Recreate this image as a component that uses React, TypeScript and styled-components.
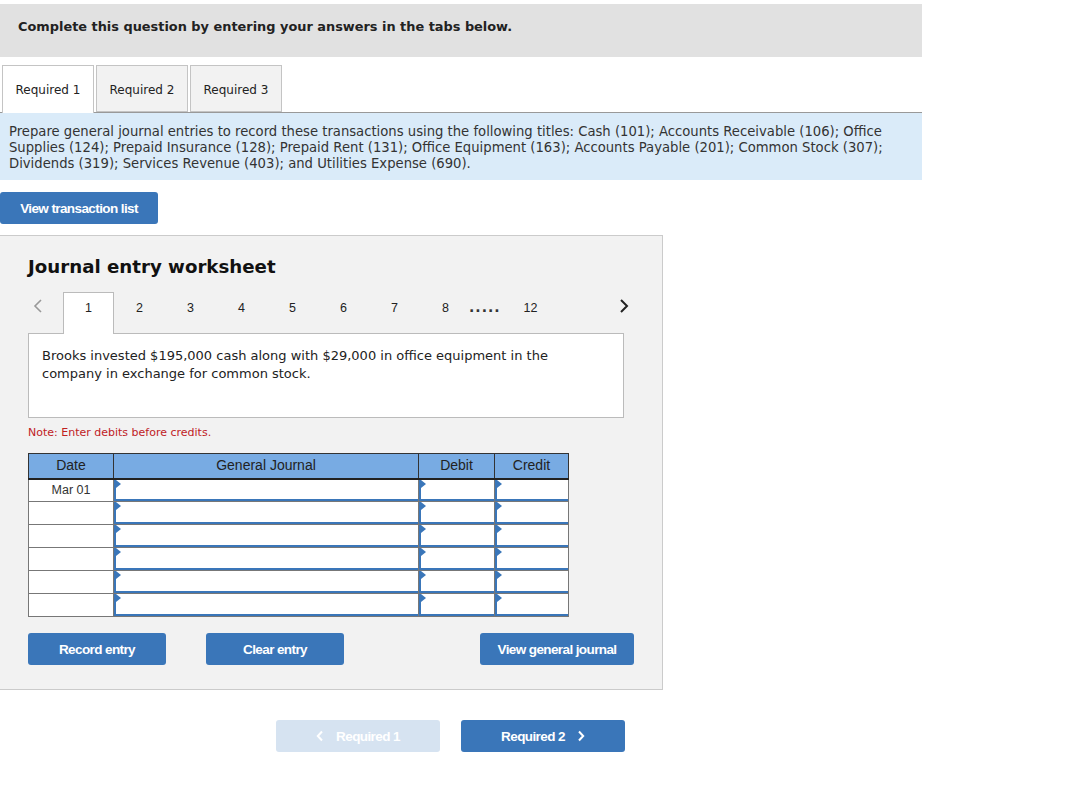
import React from "react";
import styled, { createGlobalStyle } from "styled-components";

const Global = createGlobalStyle`
  html, body { margin: 0; padding: 0; background: #fff; }
  body { font-family: "DejaVu Sans", Verdana, sans-serif; color: #222; }
`;

const Page = styled.div`
  width: 1075px;
  padding-top: 4px;
`;

const Banner = styled.div`
  width: 922px;
  height: 53px;
  background: #e1e1e1;
  box-sizing: border-box;
  padding: 15px 0 0 18px;
  font-size: 12.9px;
  line-height: 16px;
  font-weight: bold;
  color: #222;
`;

const TabBar = styled.div`
  width: 922px;
  margin-top: 8px;
  display: flex;
  gap: 2px;
  padding-left: 2px;
  box-sizing: border-box;
  border-bottom: 1px solid #999;
  height: 48px;
`;

const Tab = styled.div<{ $active?: boolean }>`
  width: 92px;
  height: ${(p) => (p.$active ? "48px" : "47px")};
  box-sizing: border-box;
  border: 1px solid #c4c4c4;
  border-bottom: ${(p) => (p.$active ? "none" : "1px solid #c4c4c4")};
  background: ${(p) => (p.$active ? "#fff" : "#f2f2f2")};
  display: flex;
  align-items: center;
  justify-content: center;
  font-size: 12px;
  color: #222;
  margin-bottom: ${(p) => (p.$active ? "-1px" : "0")};
  padding-top: ${(p) => (p.$active ? "0" : "2px")};
`;

const Info = styled.div`
  width: 922px;
  box-sizing: border-box;
  background: #daebf9;
  padding: 11px 9px 8px 9px;
  font-size: 13.2px;
  line-height: 16px;
  color: #333;
`;

const Btn = styled.button<{ $w: number; $disabled?: boolean }>`
  width: ${(p) => p.$w}px;
  height: 32px;
  border: none;
  border-radius: 3px;
  background: ${(p) => (p.$disabled ? "#d6e3f1" : "#3a76b9")};
  color: #fff;
  font-family: "Liberation Sans Narrow", "Liberation Sans", Arial, sans-serif;
  font-weight: bold;
  font-size: 13.5px;
  letter-spacing: -0.6px;
  display: flex;
  align-items: center;
  justify-content: center;
  gap: 12px;
  padding: 0;
  cursor: pointer;
`;

const TopBtnRow = styled.div`
  margin-top: 12px;
`;

const Worksheet = styled.div`
  margin-top: 11px;
  width: 663px;
  height: 455px;
  box-sizing: border-box;
  background: #f2f2f2;
  border: 1px solid #cbcbcb;
  border-left: none;
  padding: 19px 0 0 28px;
`;

const Title = styled.h2`
  margin: 0;
  font-size: 18.2px;
  font-weight: bold;
  color: #111;
  line-height: 24px;
`;

const Pager = styled.div`
  margin-top: 13px;
  height: 41px;
  display: flex;
  align-items: flex-start;
  width: 610px;
`;

const Chevron = styled.span<{ $dark?: boolean }>`
  width: 20px;
  display: flex;
  justify-content: center;
  padding-top: 6px;
  color: ${(p) => (p.$dark ? "#222" : "#999")};
`;

const PageNum = styled.div<{ $active?: boolean }>`
  width: 51px;
  box-sizing: border-box;
  display: flex;
  justify-content: center;
  padding-top: 7px;
  font-family: "Liberation Sans", Arial, sans-serif;
  font-size: 12.5px;
  line-height: 16px;
  color: #222;
  background: ${(p) => (p.$active ? "#fff" : "transparent")};
  border: ${(p) => (p.$active ? "1px solid #bbb" : "1px solid transparent")};
  border-bottom: none;
  position: relative;
  z-index: 1;
  height: ${(p) => (p.$active ? "42px" : "41px")};
`;

const Dots = styled.div`
  width: 36px;
  margin-left: -2px;
  padding-top: 7px;
  font-size: 14px;
  line-height: 16px;
  font-weight: bold;
  letter-spacing: 1px;
  color: #333;
`;

const Desc = styled.div`
  width: 596px;
  height: 85px;
  box-sizing: border-box;
  background: #fff;
  border: 1px solid #bbb;
  padding: 13px 13px;
  font-size: 13px;
  line-height: 18px;
  color: #222;
`;

const Note = styled.div`
  margin-top: 8px;
  font-size: 11px;
  color: #c0211f;
  line-height: 14px;
`;

const Table = styled.table`
  margin-top: 13px;
  border-collapse: collapse;
  font-family: "Liberation Sans", Arial, sans-serif;
  font-size: 12.5px;
`;

const Th = styled.th<{ $w: number }>`
  width: ${(p) => p.$w}px;
  height: 25px;
  box-sizing: border-box;
  background: #78abe3;
  border: 1px solid #333;
  border-bottom: 2px solid #222;
  font-weight: normal;
  font-size: 14px;
  color: #222;
  padding: 0 0 2px 0;
`;

const Td = styled.td`
  height: 23px;
  padding: 0;
  border: 1px solid #777;
  box-sizing: border-box;
  text-align: center;
  color: #333;
  background: #fff;
`;

const InputCell = styled.td`
  height: 23px;
  padding: 0;
  border: 1px solid #777;
  box-sizing: border-box;
  background: #fff;
  position: relative;
`;

const Field = styled.div`
  position: absolute;
  inset: 0;
  border-left: 2px solid #3a76b9;
  border-bottom: 2px solid #3a76b9;
  background: #fff;
`;

const Marker = styled.span`
  position: absolute;
  left: 0;
  top: 0;
  width: 0;
  height: 0;
  border-top: 4px solid transparent;
  border-bottom: 4px solid transparent;
  border-left: 5px solid #3a76b9;
`;

const ActionRow = styled.div`
  margin-top: 16px;
  display: flex;
  width: 606px;
`;

const Spacer = styled.div<{ $w?: number }>`
  width: ${(p) => (p.$w ? `${p.$w}px` : "auto")};
  flex: ${(p) => (p.$w ? "none" : "1")};
`;

const NavRow = styled.div`
  margin-top: 30px;
  padding-left: 276px;
  display: flex;
  gap: 21px;
`;

const ChevL = ({ color = "#999" }: { color?: string }) => (
  <svg width="10" height="16" viewBox="0 0 10 16">
    <path d="M8 2 L2 8 L8 14" fill="none" stroke={color} strokeWidth="1.6" />
  </svg>
);
const ChevR = ({ color = "#222" }: { color?: string }) => (
  <svg width="10" height="16" viewBox="0 0 10 16">
    <path d="M2 2 L8 8 L2 14" fill="none" stroke={color} strokeWidth="2" />
  </svg>
);
const SmallChev = ({ dir }: { dir: "l" | "r" }) => (
  <svg width="8" height="12" viewBox="0 0 8 12">
    <path
      d={dir === "l" ? "M6 1.5 L1.8 6 L6 10.5" : "M2 1.5 L6.2 6 L2 10.5"}
      fill="none"
      stroke="#fff"
      strokeWidth="2"
    />
  </svg>
);

export default function App() {
  const rows = ["Mar 01", "", "", "", "", ""];
  return (
    <Page>
      <Global />
      <Banner>Complete this question by entering your answers in the tabs below.</Banner>
      <TabBar>
        <Tab $active>Required 1</Tab>
        <Tab>Required 2</Tab>
        <Tab>Required 3</Tab>
      </TabBar>
      <Info>
        Prepare general journal entries to record these transactions using the following titles: Cash (101); Accounts Receivable (106); Office
        <br />
        Supplies (124); Prepaid Insurance (128); Prepaid Rent (131); Office Equipment (163); Accounts Payable (201); Common Stock (307);
        <br />
        Dividends (319); Services Revenue (403); and Utilities Expense (690).
      </Info>
      <TopBtnRow>
        <Btn $w={158}>View transaction list</Btn>
      </TopBtnRow>
      <Worksheet>
        <Title>Journal entry worksheet</Title>
        <Pager>
          <Chevron>
            <ChevL />
          </Chevron>
          <Spacer $w={15} />
          <PageNum $active>1</PageNum>
          {[2, 3, 4, 5, 6, 7, 8].map((n) => (
            <PageNum key={n}>{n}</PageNum>
          ))}
          <Dots>.....</Dots>
          <PageNum>12</PageNum>
          <Spacer />
          <Chevron $dark>
            <ChevR />
          </Chevron>
          <Spacer $w={4} />
        </Pager>
        <Desc>
          Brooks invested $195,000 cash along with $29,000 in office equipment in the
          <br />
          company in exchange for common stock.
        </Desc>
        <Note>Note: Enter debits before credits.</Note>
        <Table>
          <thead>
            <tr>
              <Th $w={85}>Date</Th>
              <Th $w={305}>General Journal</Th>
              <Th $w={76}>Debit</Th>
              <Th $w={74}>Credit</Th>
            </tr>
          </thead>
          <tbody>
            {rows.map((d, i) => (
              <tr key={i}>
                <Td>{d}</Td>
                {[0, 1, 2].map((c) => (
                  <InputCell key={c}>
                    <Field>
                      <Marker />
                    </Field>
                  </InputCell>
                ))}
              </tr>
            ))}
          </tbody>
        </Table>
        <ActionRow>
          <Btn $w={138}>Record entry</Btn>
          <Spacer $w={40} />
          <Btn $w={138}>Clear entry</Btn>
          <Spacer />
          <Btn $w={154}>View general journal</Btn>
        </ActionRow>
      </Worksheet>
      <NavRow>
        <Btn $w={164} $disabled>
          <SmallChev dir="l" />
          Required 1
        </Btn>
        <Btn $w={164}>
          Required 2
          <SmallChev dir="r" />
        </Btn>
      </NavRow>
    </Page>
  );
}
